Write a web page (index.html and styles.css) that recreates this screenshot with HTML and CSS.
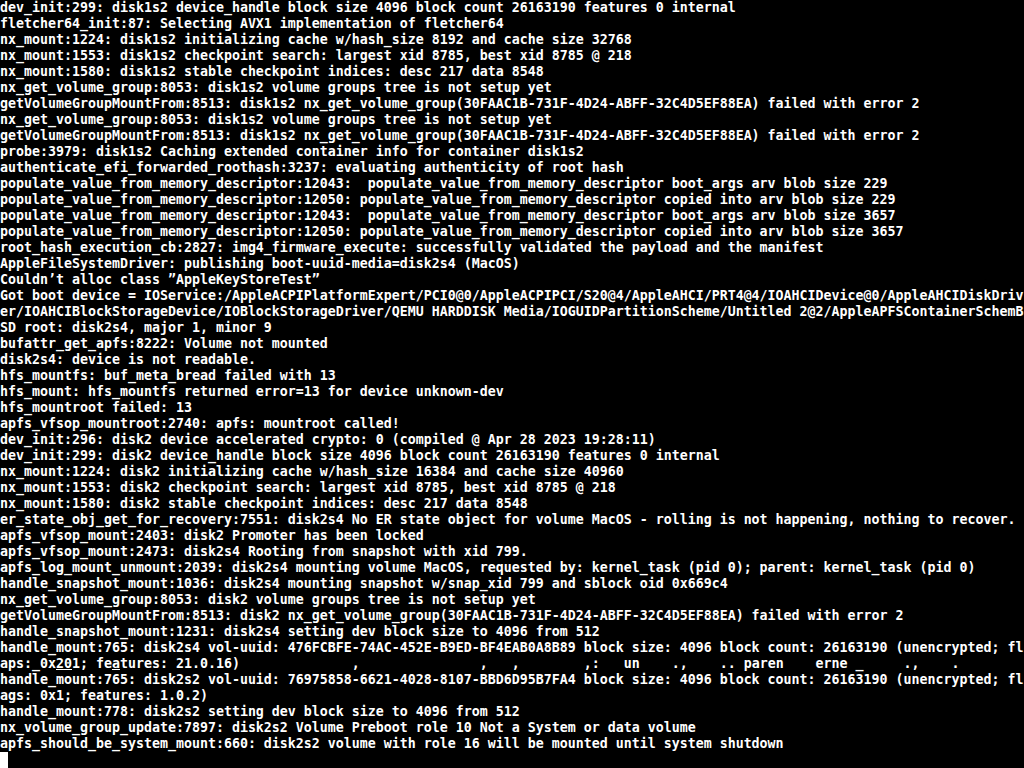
FILE: index.html
```html
<!DOCTYPE html>
<html lang="en">
<head>
<meta charset="utf-8">
<title>Verbose boot</title>
<link rel="stylesheet" href="styles.css">
</head>
<body>
<main class="console">
<div class="line">dev_init:299: disk1s2 device_handle block size 4096 block count 26163190 features 0 internal</div>
<div class="line">fletcher64_init:87: Selecting AVX1 implementation of fletcher64</div>
<div class="line">nx_mount:1224: disk1s2 initializing cache w/hash_size 8192 and cache size 32768</div>
<div class="line">nx_mount:1553: disk1s2 checkpoint search: largest xid 8785, best xid 8785 @ 218</div>
<div class="line">nx_mount:1580: disk1s2 stable checkpoint indices: desc 217 data 8548</div>
<div class="line">nx_get_volume_group:8053: disk1s2 volume groups tree is not setup yet</div>
<div class="line">getVolumeGroupMountFrom:8513: disk1s2 nx_get_volume_group(30FAAC1B-731F-4D24-ABFF-32C4D5EF88EA) failed with error 2</div>
<div class="line">nx_get_volume_group:8053: disk1s2 volume groups tree is not setup yet</div>
<div class="line">getVolumeGroupMountFrom:8513: disk1s2 nx_get_volume_group(30FAAC1B-731F-4D24-ABFF-32C4D5EF88EA) failed with error 2</div>
<div class="line">probe:3979: disk1s2 Caching extended container info for container disk1s2</div>
<div class="line">authenticate_efi_forwarded_roothash:3237: evaluating authenticity of root hash</div>
<div class="line">populate_value_from_memory_descriptor:12043:  populate_value_from_memory_descriptor boot_args arv blob size 229</div>
<div class="line">populate_value_from_memory_descriptor:12050: populate_value_from_memory_descriptor copied into arv blob size 229</div>
<div class="line">populate_value_from_memory_descriptor:12043:  populate_value_from_memory_descriptor boot_args arv blob size 3657</div>
<div class="line">populate_value_from_memory_descriptor:12050: populate_value_from_memory_descriptor copied into arv blob size 3657</div>
<div class="line">root_hash_execution_cb:2827: img4_firmware_execute: successfully validated the payload and the manifest</div>
<div class="line">AppleFileSystemDriver: publishing boot-uuid-media=disk2s4 (MacOS)</div>
<div class="line">Couldn’t alloc class ”AppleKeyStoreTest”</div>
<div class="line">Got boot device = IOService:/AppleACPIPlatformExpert/PCI0@0/AppleACPIPCI/S20@4/AppleAHCI/PRT4@4/IOAHCIDevice@0/AppleAHCIDiskDriv</div>
<div class="line">er/IOAHCIBlockStorageDevice/IOBlockStorageDriver/QEMU HARDDISK Media/IOGUIDPartitionScheme/Untitled 2@2/AppleAPFSContainerSchemB</div>
<div class="line">SD root: disk2s4, major 1, minor 9</div>
<div class="line">bufattr_get_apfs:8222: Volume not mounted</div>
<div class="line">disk2s4: device is not readable.</div>
<div class="line">hfs_mountfs: buf_meta_bread failed with 13</div>
<div class="line">hfs_mount: hfs_mountfs returned error=13 for device unknown-dev</div>
<div class="line">hfs_mountroot failed: 13</div>
<div class="line">apfs_vfsop_mountroot:2740: apfs: mountroot called!</div>
<div class="line">dev_init:296: disk2 device accelerated crypto: 0 (compiled @ Apr 28 2023 19:28:11)</div>
<div class="line">dev_init:299: disk2 device_handle block size 4096 block count 26163190 features 0 internal</div>
<div class="line">nx_mount:1224: disk2 initializing cache w/hash_size 16384 and cache size 40960</div>
<div class="line">nx_mount:1553: disk2 checkpoint search: largest xid 8785, best xid 8785 @ 218</div>
<div class="line">nx_mount:1580: disk2 stable checkpoint indices: desc 217 data 8548</div>
<div class="line">er_state_obj_get_for_recovery:7551: disk2s4 No ER state object for volume MacOS - rolling is not happening, nothing to recover.</div>
<div class="line">apfs_vfsop_mount:2403: disk2 Promoter has been locked</div>
<div class="line">apfs_vfsop_mount:2473: disk2s4 Rooting from snapshot with xid 799.</div>
<div class="line">apfs_log_mount_unmount:2039: disk2s4 mounting volume MacOS, requested by: kernel_task (pid 0); parent: kernel_task (pid 0)</div>
<div class="line">handle_snapshot_mount:1036: disk2s4 mounting snapshot w/snap_xid 799 and sblock oid 0x669c4</div>
<div class="line">nx_get_volume_group:8053: disk2 volume groups tree is not setup yet</div>
<div class="line">getVolumeGroupMountFrom:8513: disk2 nx_get_volume_group(30FAAC1B-731F-4D24-ABFF-32C4D5EF88EA) failed with error 2</div>
<div class="line">handle_snapshot_mount:1231: disk2s4 setting dev block size to 4096 from 512</div>
<div class="line">handle_mount:765: disk2s4 vol-uuid: 476FCBFE-74AC-452E-B9ED-BF4EAB0A8B89 block size: 4096 block count: 26163190 (unencrypted; fl</div>
<div class="line">aps:_0x<span class="ul">2</span><span class="ul">0</span>1; fe<span class="ul">a</span>tures: 21.0.16)              ,               ,   ,        ,:   un    .,    .. paren    erne _     .,    .</div>
<div class="line">handle_mount:765: disk2s2 vol-uuid: 76975858-6621-4028-8107-BBD6D95B7FA4 block size: 4096 block count: 26163190 (unencrypted; fl</div>
<div class="line">ags: 0x1; features: 1.0.2)</div>
<div class="line">handle_mount:778: disk2s2 setting dev block size to 4096 from 512</div>
<div class="line">nx_volume_group_update:7897: disk2s2 Volume Preboot role 10 Not a System or data volume</div>
<div class="line">apfs_should_be_system_mount:660: disk2s2 volume with role 16 will be mounted until system shutdown</div>
<div class="line"><span class="cursor"></span></div>
</main>
</body>
</html>
```

FILE: styles.css
```css
html, body {
  margin: 0;
  padding: 0;
  background: #000;
  height: 100%;
  overflow: hidden;
}

.console {
  width: 1024px;
  height: 768px;
  overflow: hidden;
  color: #fff;
  font-family: "DejaVu Sans Mono", monospace;
  font-weight: bold;
  font-size: 13.29px;
  line-height: 16px;
}

.line {
  height: 16px;
  white-space: pre;
  overflow: hidden;
}

.ul {
  text-decoration: underline;
  text-decoration-thickness: 1px;
  text-underline-offset: 1px;
}

.cursor {
  display: inline-block;
  width: 8px;
  height: 16px;
  background: #fff;
  vertical-align: top;
}
```
